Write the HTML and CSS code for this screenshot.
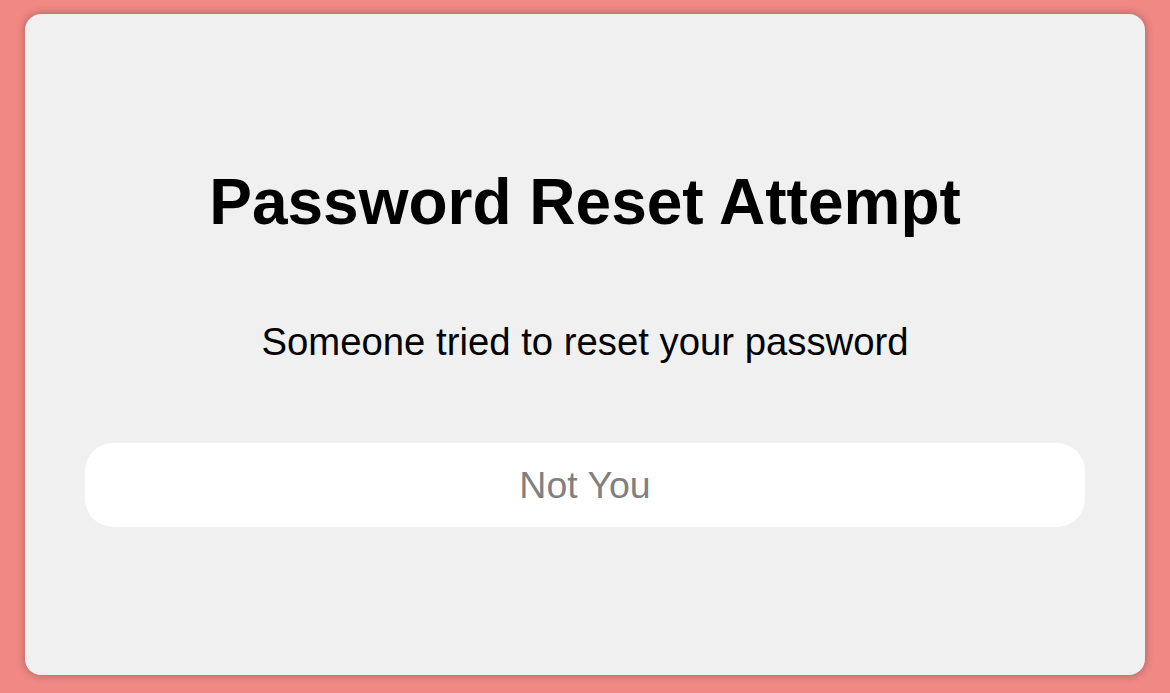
FILE: index.html
```html
<!DOCTYPE html>
<html lang="en">
<head>
<meta charset="utf-8">
<title>Password Reset Attempt</title>
<link rel="stylesheet" href="styles.css">
</head>
<body>
  <main class="card">
    <h1 class="title">Password Reset Attempt</h1>
    <p class="message">Someone tried to reset your password</p>
    <button class="action" type="button">Not You</button>
  </main>
</body>
</html>
```

FILE: styles.css
```css
html, body {
  margin: 0;
  height: 100%;
}

body {
  background: #f08884;
  font-family: "Liberation Sans", Arial, Helvetica, sans-serif;
  box-sizing: border-box;
  padding: 14px 25px 18px;
  display: flex;
}

.card {
  flex: 1;
  background: #f0f0f0;
  border-radius: 16px;
  box-shadow: 0 0 8px rgba(0, 0, 0, 0.3);
  display: flex;
  flex-direction: column;
  justify-content: center;
  align-items: stretch;
  padding: 4px 60px 0;
  text-align: center;
}

.title {
  margin: 0;
  font-size: 64px;
  line-height: 1.15;
  font-weight: 700;
  color: #000;
}

.message {
  margin: 81px 0 0;
  font-size: 38.3px;
  line-height: 1.15;
  color: #000;
}

.action {
  margin-top: 79px;
  height: 84px;
  border: none;
  border-radius: 28px;
  background: #ffffff;
  color: #808080;
  font-family: inherit;
  font-size: 37.5px;
  padding: 0;
  cursor: pointer;
}
```
